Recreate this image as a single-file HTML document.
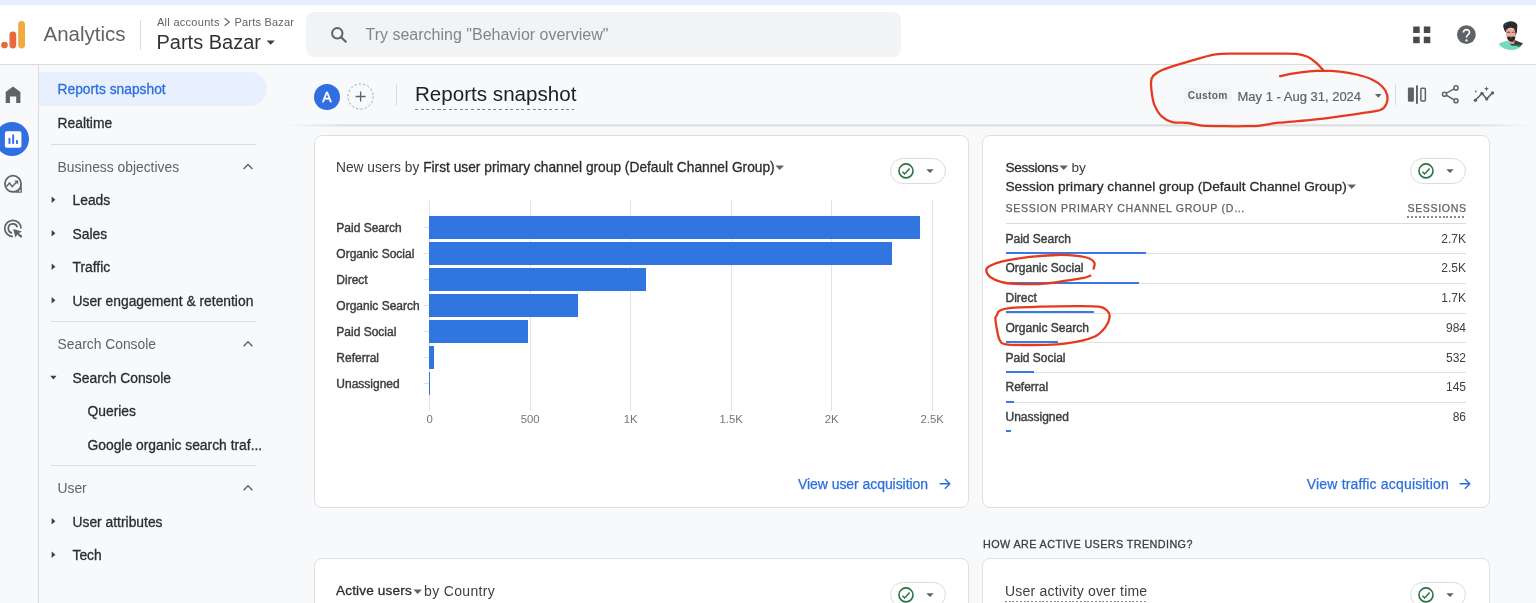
<!DOCTYPE html>
<html lang="en">
<head>
<meta charset="utf-8">
<title>Analytics | Reports snapshot</title>
<style>
  html, body { margin: 0; padding: 0; }
  body {
    width: 1536px; height: 603px; overflow: hidden; position: relative;
    background: #f8f9fa;
    font-family: "Liberation Sans", sans-serif;
    color: #3c4043;
    -webkit-font-smoothing: antialiased;
  }
  .abs { position: absolute; }
  .t { position: absolute; white-space: nowrap; line-height: 1; transform: translateY(-50%); }
  .b { font-weight: bold; }

  /* top chrome */
  #strip { left: 0; top: 0; width: 1536px; height: 6px; background: linear-gradient(to bottom, #e8eefc 0, #e8eefc 5px, #f4f7fd 5px, #f4f7fd 6px); }
  #header { left: 0; top: 6px; width: 1536px; height: 58px; background: #fff; border-bottom: 1px solid #dadce0; }
  #search { left: 306px; top: 12px; width: 595px; height: 45px; background: #f1f3f4; border-radius: 8px; }

  /* rail + nav */
  #railborder { left: 38px; top: 65px; width: 1px; height: 538px; background: #dadce0; }
  #navactive { left: 39px; top: 72px; width: 228px; height: 34px; background: #e8f0fe; border-radius: 0 17px 17px 0; }
  .nav { font-size: 13.85px; color: #2a2d30; left: 72.5px; -webkit-text-stroke: 0.3px #2a2d30; margin-top: 1px; }
  .navh { font-size: 13.85px; color: #5f6368; left: 57.5px; margin-top: 0.8px; }
  .navdiv { position: absolute; left: 51px; width: 205px; height: 1px; background: #dadce0; }

  /* cards */
  .card { position: absolute; background: #fff; border: 1px solid #dddfe3; border-radius: 8px; box-sizing: border-box; }
  .pill { position: absolute; width: 55.7px; height: 25.6px; border: 1px solid #dadce0; border-radius: 13px; box-sizing: border-box; background: #fff; }
  .grid { position: absolute; top: 199.5px; width: 1px; height: 211.5px; background: #e3e3e3; }
  .bar { position: absolute; left: 429px; height: 23px; background: #3075e0; }
  .blab { font-size: 12px; color: #3c4043; left: 336.3px; -webkit-text-stroke: 0.42px #3c4043; }
  .xt { font-size: 11.3px; color: #757575; transform: translate(-50%, -50%); }
  .link { font-size: 14px; color: #2b6fdc; -webkit-text-stroke: 0.25px #2b6fdc; }
  .rlab { font-size: 12px; color: #3c4043; left: 1005.5px; -webkit-text-stroke: 0.42px #3c4043; }
  .rval { font-size: 12px; color: #3c4043; right: 70px; }
  .rsep { position: absolute; left: 1005.5px; width: 460.5px; height: 1px; background: #e0e0e0; }
  .rbar { position: absolute; left: 1005.5px; height: 2px; background: #3b78e7; }
</style>
</head>
<body>
<div id="root" style="position:absolute; left:0; top:0; width:1536px; height:603px; will-change:transform; overflow:hidden;">

<!-- ===== top chrome ===== -->
<div id="strip" class="abs"></div>
<div id="header" class="abs"></div>
<div id="search" class="abs"></div>

<!-- GA logo -->
<svg class="abs" style="left:0;top:18px" width="30" height="34" viewBox="0 0 30 34">
  <circle cx="4.5" cy="27.1" r="3.3" fill="#e8683f"/>
  <rect x="9.5" y="13.4" width="6.7" height="17" rx="3.35" fill="#e8683f"/>
  <rect x="18.2" y="3" width="6.8" height="27.4" rx="3.4" fill="#f0ab3e"/>
</svg>
<div id="tAnalytics" class="t" style="left:43.5px; top:34px; font-size:20.5px; color:#5f6368;">Analytics</div>
<div class="abs" style="left:140px; top:20px; width:1px; height:30px; background:#dadce0;"></div>
<div id="tCrumb" class="t" style="left:157px; top:22px; font-size:11px; color:#5f6368; letter-spacing:0.28px;">All accounts</div>
<svg class="abs" style="left:223px;top:17px" width="8" height="10" viewBox="0 0 8 10"><path d="M1.6 1.2 L6.4 5 L1.6 8.8" fill="none" stroke="#5f6368" stroke-width="1.1"/></svg>
<div id="tCrumb2" class="t" style="left:234.5px; top:22px; font-size:11px; color:#5f6368; letter-spacing:0.2px;">Parts Bazar</div>
<div id="tProp" class="t" style="left:156.5px; top:41.6px; font-size:20px; color:#303336;">Parts Bazar</div>
<svg class="abs" style="left:266px;top:40px" width="10" height="6" viewBox="0 0 10 6"><path d="M0.6 0.6 L8.8 0.6 L4.7 4.7 Z" fill="#3c4043"/></svg>

<!-- search icon + placeholder -->
<svg class="abs" style="left:329px;top:25px" width="20" height="20" viewBox="0 0 20 20">
  <circle cx="8.3" cy="8.3" r="5.2" fill="none" stroke="#5f6368" stroke-width="2"/>
  <path d="M12.2 12.2 L17.3 17.3" stroke="#5f6368" stroke-width="2.2" fill="none"/>
</svg>
<div id="tSearch" class="t" style="left:365.5px; top:35px; font-size:16px; color:#80868b;">Try searching "Behavior overview"</div>

<!-- apps grid -->
<svg class="abs" style="left:1413px;top:26px" width="18" height="18" viewBox="0 0 18 18">
  <rect x="0.2" y="0.5" width="6.5" height="6.5" fill="#46494d"/><rect x="10.8" y="0.5" width="6.5" height="6.5" fill="#46494d"/>
  <rect x="0.2" y="10.7" width="6.5" height="6.5" fill="#46494d"/><rect x="10.8" y="10.7" width="6.5" height="6.5" fill="#46494d"/>
</svg>
<!-- help -->
<svg class="abs" style="left:1456px;top:24px" width="22" height="22" viewBox="0 0 22 22">
  <circle cx="10.4" cy="10.7" r="9.4" fill="#5f6368"/>
  <path d="M7.4 8.6 C7.4 4.6 13.6 4.8 13.5 8.4 C13.4 10.6 10.5 10.7 10.5 13.4" fill="none" stroke="#fff" stroke-width="1.7"/>
  <circle cx="10.5" cy="16.4" r="1.15" fill="#fff"/>
</svg>
<!-- avatar (drawn in 15.86x zoom coordinates) -->
<svg class="abs" style="left:1494px;top:16px" width="36" height="38" viewBox="0 0 571 603">
  <g>
    <path d="M72 445 Q150 395 215 392 L300 450 L400 470 L446 470 A252 252 0 0 1 72 445 Z" fill="#72dcc1"/>
    <path d="M250 395 L335 385 L462 436 L405 486 L265 462 Z" fill="#34383a"/>
    <path d="M275 462 L420 452 L412 472 L290 476 Z" fill="#3f8b4d"/>
    <path d="M188 200 Q180 300 205 350 Q240 440 300 420 Q345 380 348 300 L345 195 Z" fill="#ecac98"/>
    <path d="M240 400 L325 395 L322 442 Q285 452 250 432 Z" fill="#e89c88"/>
    <path d="M146 170 Q140 120 200 100 Q270 70 330 100 Q385 130 368 180 Q372 260 345 305 Q335 230 318 200 Q250 170 198 215 Q192 250 186 262 Q160 230 146 170 Z" fill="#2a2c30"/>
    <path d="M205 255 Q235 240 262 256 L262 268 Q235 262 205 270 Z M282 256 Q310 240 332 252 L332 266 Q310 260 282 268 Z" fill="#5b5e63"/>
    <path d="M206 335 Q225 322 270 330 Q315 318 338 335 Q338 390 300 408 Q262 416 228 385 Q208 365 206 335 Z" fill="#2b2a2b"/>
    <path d="M255 340 Q272 334 290 342 Q272 350 255 340 Z" fill="#d8736a"/>
    <circle cx="184" cy="132" r="9" fill="#3b7be0"/><circle cx="214" cy="101" r="8" fill="#5b8fe8"/>
  </g>
</svg>

<!-- ===== rail + nav ===== -->
<div id="railborder" class="abs"></div>
<div id="navactive" class="abs"></div>

<!-- rail: home -->
<svg class="abs" style="left:3px;top:84px" width="22" height="22" viewBox="0 0 22 22">
  <path d="M2.7 18.9 L2.7 7.9 L10 2.5 L17.4 7.9 L17.4 18.9 L13.2 18.9 L13.2 12.4 L6.95 12.4 L6.95 18.9 Z" fill="#5f6368"/>
</svg>
<!-- rail: reports (active) -->
<div class="abs" style="left:-4.6px; top:122.4px; width:33.8px; height:33.8px; border-radius:50%; background:#2f6fe0;"></div>
<svg class="abs" style="left:4px;top:130px" width="20" height="20" viewBox="0 0 20 20">
  <rect x="0.9" y="1.2" width="16.5" height="16.5" rx="1.8" fill="#fff"/>
  <rect x="4.5" y="7.9" width="1.9" height="6" fill="#2f6fe0"/>
  <rect x="8.2" y="4.5" width="1.9" height="9.4" fill="#2f6fe0"/>
  <rect x="12" y="10.1" width="1.9" height="3.8" fill="#2f6fe0"/>
</svg>
<!-- rail: explore -->
<svg class="abs" style="left:2px;top:172px" width="24" height="24" viewBox="0 0 24 24">
  <circle cx="11" cy="11.8" r="8.1" fill="none" stroke="#5f6368" stroke-width="1.75"/>
  <path d="M19.9 11.8 L19.9 19.9 Q19.9 20.7 19.1 20.7 L11 20.7 A8.9 8.9 0 0 0 19.9 11.8 Z" fill="#5f6368"/>
  <circle cx="17.9" cy="18.9" r="0.85" fill="#f1f3f4"/>
  <path d="M4.5 14.4 L7.45 11 L10.2 14.7 L14.9 9.7" fill="none" stroke="#5f6368" stroke-width="1.5"/>
  <path d="M12.2 8.4 L16.2 8.4 L16.2 12.4 Z" fill="#5f6368"/>
</svg>
<!-- rail: advertising -->
<svg class="abs" style="left:2px;top:217px" width="24" height="24" viewBox="0 0 24 24">
  <path d="M19 11.4 A8.1 8.1 0 1 0 10.9 19.5" fill="none" stroke="#5f6368" stroke-width="1.75"/>
  <path d="M15.34 10.21 A4.6 4.6 0 1 0 10.1 15.93" fill="none" stroke="#5f6368" stroke-width="1.75"/>
  <path d="M11.2 11.9 L19.9 14.4 L16.7 16.2 L20.4 19.1 L18.9 20.9 L15.4 17.6 L13.4 20.4 Z" fill="#5f6368"/>
</svg>

<!-- nav text -->
<div id="n1" class="t" style="left:57.5px; top:89.9px; font-size:13.8px; color:#2b6fdc; -webkit-text-stroke:0.3px #2b6fdc;">Reports snapshot</div>
<div id="n2" class="t nav" style="left:57.5px; top:123px;">Realtime</div>
<div class="navdiv" style="top:144px;"></div>
<div id="n3" class="t navh" style="top:167px;">Business objectives</div>
<div id="n4" class="t nav" style="top:200px;">Leads</div>
<div id="n5" class="t nav" style="top:233.5px;">Sales</div>
<div id="n6" class="t nav" style="top:267px;">Traffic</div>
<div id="n7" class="t nav" style="top:300.5px;">User engagement &amp; retention</div>
<div class="navdiv" style="top:321px;"></div>
<div id="n8" class="t navh" style="top:344px;">Search Console</div>
<div id="n9" class="t nav" style="top:377.5px;">Search Console</div>
<div id="n10" class="t nav" style="left:87.5px; top:411px;">Queries</div>
<div id="n11" class="t nav" style="left:87.5px; top:444.5px;">Google organic search traf...</div>
<div class="navdiv" style="top:465px;"></div>
<div id="n12" class="t navh" style="top:488px;">User</div>
<div id="n13" class="t nav" style="top:521.5px;">User attributes</div>
<div id="n14" class="t nav" style="top:555px;">Tech</div>

<!-- nav chevrons + triangles -->
<svg class="abs" style="left:0;top:0;pointer-events:none" width="300" height="603" viewBox="0 0 300 603">
  <g fill="none" stroke="#5f6368" stroke-width="1.4">
    <path d="M243.6 169 L248 164.4 L252.4 169"/>
    <path d="M243.6 346.3 L248 341.7 L252.4 346.3"/>
    <path d="M243.6 490.3 L248 485.7 L252.4 490.3"/>
  </g>
  <g fill="#3c4043">
    <path d="M51.6 196.6 L55.4 199.8 L51.6 203 Z"/>
    <path d="M51.6 230.1 L55.4 233.3 L51.6 236.5 Z"/>
    <path d="M51.6 263.6 L55.4 266.8 L51.6 270 Z"/>
    <path d="M51.6 297.1 L55.4 300.3 L51.6 303.5 Z"/>
    <path d="M50.2 375.8 L56.6 375.8 L53.4 379.4 Z"/>
    <path d="M51.6 518.1 L55.4 521.3 L51.6 524.5 Z"/>
    <path d="M51.6 551.6 L55.4 554.8 L51.6 558 Z"/>
  </g>
</svg>

<!-- ===== report header row ===== -->
<div class="abs" style="left:286px; top:123.6px; width:1246px; height:3px; background:linear-gradient(to bottom, rgba(60,64,67,0.04), rgba(60,64,67,0.17) 35%, rgba(60,64,67,0.15) 65%, rgba(60,64,67,0)); -webkit-mask-image:linear-gradient(to right, transparent, #000 5%, #000 95%, transparent); mask-image:linear-gradient(to right, transparent, #000 5%, #000 95%, transparent);"></div>
<div class="abs" style="left:314px; top:83.5px; width:26px; height:26px; border-radius:50%; background:#2f6fe0;"></div>
<div id="tA" class="t" style="left:327px; top:96.8px; font-size:14px; color:#fff; transform:translate(-50%,-50%); -webkit-text-stroke:0.45px #fff;">A</div>
<svg class="abs" style="left:346px;top:82px" width="30" height="30" viewBox="0 0 30 30">
  <circle cx="14.6" cy="14.5" r="12.6" fill="none" stroke="#9aa0a6" stroke-width="1" stroke-dasharray="2.2 2.2"/>
  <path d="M9.6 14.5 H19.6 M14.6 9.5 V19.5" stroke="#5f6368" stroke-width="1.3" fill="none"/>
</svg>
<div class="abs" style="left:396px; top:84px; width:1px; height:22px; background:#dadce0;"></div>
<div id="tTitle" class="t" style="left:415px; top:94.2px; font-size:20.6px; color:#202124;">Reports snapshot</div>
<div class="abs" style="left:415.1px; top:108.8px; width:159.4px; height:1.2px; background:repeating-linear-gradient(to right, #7e8185 0, #7e8185 3.1px, transparent 3.1px, transparent 5.6px);"></div>

<!-- date range -->
<div class="abs" style="left:1184px; top:88.3px; width:47.7px; height:14.6px; background:#f1f3f4; border-radius:2px;"></div>
<div id="tCustom" class="t b" style="left:1187.8px; top:95.7px; font-size:10.2px; color:#5f6368; letter-spacing:0.3px;">Custom</div>
<div id="tDate" class="t" style="left:1237.5px; top:95.6px; font-size:13px; color:#5f6368; -webkit-text-stroke:0.2px #5f6368;">May 1 - Aug 31, 2024</div>
<svg class="abs" style="left:1374px;top:93px" width="10" height="6" viewBox="0 0 10 6"><path d="M1 1 L7.6 1 L4.3 4.8 Z" fill="#5f6368"/></svg>
<div class="abs" style="left:1395px; top:84px; width:1px; height:21px; background:#dadce0;"></div>
<!-- compare -->
<svg class="abs" style="left:1406px;top:84px" width="22" height="22" viewBox="0 0 22 22">
  <rect x="1.9" y="3.4" width="6" height="14.4" rx="1.2" fill="#5f6368"/>
  <rect x="10" y="1.4" width="1.9" height="18.4" fill="#5f6368"/>
  <rect x="14.85" y="4.15" width="4.5" height="12.9" rx="1" fill="none" stroke="#5f6368" stroke-width="1.5"/>
</svg>
<!-- share -->
<svg class="abs" style="left:1440px;top:83px" width="22" height="22" viewBox="0 0 22 22">
  <path d="M16 4.9 L4.5 11.2 L16 17.8" fill="none" stroke="#5f6368" stroke-width="1.5"/>
  <circle cx="16" cy="4.9" r="2.05" fill="#f8f9fa" stroke="#5f6368" stroke-width="1.5"/>
  <circle cx="4.5" cy="11.2" r="2.05" fill="#f8f9fa" stroke="#5f6368" stroke-width="1.5"/>
  <circle cx="16" cy="17.8" r="2.05" fill="#f8f9fa" stroke="#5f6368" stroke-width="1.5"/>
</svg>
<!-- insights -->
<svg class="abs" style="left:1472px;top:83px" width="24" height="22" viewBox="0 0 24 22">
  <path d="M3.4 17.3 L10 10.4 L14.7 15.9 L20.5 9.9" fill="none" stroke="#5f6368" stroke-width="1.6"/>
  <circle cx="3.4" cy="17.3" r="1.7" fill="#5f6368"/><circle cx="10" cy="10.4" r="1.7" fill="#5f6368"/>
  <circle cx="14.7" cy="15.9" r="1.7" fill="#5f6368"/><circle cx="20.5" cy="9.9" r="1.7" fill="#5f6368"/>
  <path d="M14.5 3.2 L15.2 5 L17 5.7 L15.2 6.4 L14.5 8.2 L13.8 6.4 L12 5.7 L13.8 5 Z" fill="#5f6368"/>
  <path d="M3.8 6.8 L4.2 8 L5.4 8.4 L4.2 8.8 L3.8 10 L3.4 8.8 L2.2 8.4 L3.4 8 Z" fill="#5f6368"/>
</svg>

<!-- ===== cards ===== -->
<div class="card" style="left:314px; top:135px; width:654.5px; height:372.5px;"></div>
<div class="card" style="left:982px; top:135px; width:507.5px; height:372.5px;"></div>
<div class="card" style="left:314px; top:558px; width:654.5px; height:80px;"></div>
<div class="card" style="left:982px; top:558px; width:507.5px; height:80px;"></div>

<!-- card 1: bar chart -->
<div id="c1t" class="t" style="left:336px; top:168px; font-size:13.75px; color:#3c4043;">New users by <span style="color:#2a2d30;-webkit-text-stroke:0.3px #2a2d30;">First user primary channel group (Default Channel Group)</span></div>
<svg class="abs" style="left:775px;top:165px" width="10" height="6" viewBox="0 0 10 6"><path d="M0.4 0.6 L9 0.6 L4.7 4.9 Z" fill="#5f6368"/></svg>
<div class="pill" style="left:890.3px; top:158.0px;"></div><svg class="abs" style="left:897.0px;top:162.0px" width="18" height="18" viewBox="0 0 18 18"><circle cx="9" cy="8.9" r="7" fill="none" stroke="#2a7240" stroke-width="1.6"/><path d="M5.4 9.8 L7.7 12 L12.6 6.5" fill="none" stroke="#2a7240" stroke-width="1.4"/></svg><svg class="abs" style="left:926.3px;top:169.0px" width="9" height="5" viewBox="0 0 9 5"><path d="M0.2 0.2 L7.8 0.2 L4 4 Z" fill="#5f6368"/></svg>
<div class="grid" style="left:429.2px;"></div>
<div class="grid" style="left:529.7px;"></div>
<div class="grid" style="left:630.2px;"></div>
<div class="grid" style="left:730.7px;"></div>
<div class="grid" style="left:831.2px;"></div>
<div class="grid" style="left:931.7px;"></div>
<div class="abs" style="left:424px; top:227.0px; width:6px; height:1px; background:#e0e0e0;"></div>
<div class="bar" style="top:215.5px; width:490.7px;"></div>
<div class="t blab" style="top:227.6px;">Paid Search</div>
<div class="abs" style="left:424px; top:253.0px; width:6px; height:1px; background:#e0e0e0;"></div>
<div class="bar" style="top:241.5px; width:463.3px;"></div>
<div class="t blab" style="top:253.6px;">Organic Social</div>
<div class="abs" style="left:424px; top:279.1px; width:6px; height:1px; background:#e0e0e0;"></div>
<div class="bar" style="top:267.6px; width:216.7px;"></div>
<div class="t blab" style="top:279.7px;">Direct</div>
<div class="abs" style="left:424px; top:305.1px; width:6px; height:1px; background:#e0e0e0;"></div>
<div class="bar" style="top:293.6px; width:149.0px;"></div>
<div class="t blab" style="top:305.7px;">Organic Search</div>
<div class="abs" style="left:424px; top:331.1px; width:6px; height:1px; background:#e0e0e0;"></div>
<div class="bar" style="top:319.6px; width:99.0px;"></div>
<div class="t blab" style="top:331.7px;">Paid Social</div>
<div class="abs" style="left:424px; top:357.1px; width:6px; height:1px; background:#e0e0e0;"></div>
<div class="bar" style="top:345.6px; width:4.7px;"></div>
<div class="t blab" style="top:357.8px;">Referral</div>
<div class="abs" style="left:424px; top:383.2px; width:6px; height:1px; background:#e0e0e0;"></div>
<div class="bar" style="top:371.7px; width:1.3px;"></div>
<div class="t blab" style="top:383.8px;">Unassigned</div>
<div class="t xt" style="left:429.7px; top:419.8px;">0</div>
<div class="t xt" style="left:530.2px; top:419.8px;">500</div>
<div class="t xt" style="left:630.7px; top:419.8px;">1K</div>
<div class="t xt" style="left:731.2px; top:419.8px;">1.5K</div>
<div class="t xt" style="left:831.7px; top:419.8px;">2K</div>
<div class="t xt" style="left:932.2px; top:419.8px;">2.5K</div>
<div id="l1" class="t link" style="left:798px; top:483.8px; letter-spacing:-0.06px;">View user acquisition</div>
<svg class="abs" style="left:938px;top:477px" width="14" height="14" viewBox="0 0 14 14"><path d="M1.6 6.8 H11.6 M6.9 1.9 L11.8 6.8 L6.9 11.7" fill="none" stroke="#2b6fdc" stroke-width="1.4"/></svg>

<!-- card 2: sessions table -->
<div id="c2a" class="t" style="left:1005.5px; top:168px; font-size:13.6px; color:#3c4043;"><span style="color:#2a2d30;-webkit-text-stroke:0.3px #2a2d30;letter-spacing:-0.3px;">Sessions</span><span style="display:inline-block;width:13.2px"></span>by</div>
<svg class="abs" style="left:1058.5px;top:165px" width="10" height="6" viewBox="0 0 10 6"><path d="M0.4 0.6 L9 0.6 L4.7 4.9 Z" fill="#5f6368"/></svg>
<div id="c2b" class="t" style="left:1005.5px; top:186.6px; font-size:13.68px; color:#2a2d30; -webkit-text-stroke:0.3px #2a2d30;">Session primary channel group (Default Channel Group)</div>
<svg class="abs" style="left:1347px;top:183.6px" width="10" height="6" viewBox="0 0 10 6"><path d="M0.4 0.6 L9 0.6 L4.7 4.9 Z" fill="#5f6368"/></svg>
<div class="pill" style="left:1410.3px; top:158.0px;"></div><svg class="abs" style="left:1417.0px;top:162.0px" width="18" height="18" viewBox="0 0 18 18"><circle cx="9" cy="8.9" r="7" fill="none" stroke="#2a7240" stroke-width="1.6"/><path d="M5.4 9.8 L7.7 12 L12.6 6.5" fill="none" stroke="#2a7240" stroke-width="1.4"/></svg><svg class="abs" style="left:1446.3px;top:169.0px" width="9" height="5" viewBox="0 0 9 5"><path d="M0.2 0.2 L7.8 0.2 L4 4 Z" fill="#5f6368"/></svg>
<div id="c2h" class="t" style="left:1005.5px; top:207.6px; font-size:10.6px; color:#5f6368; letter-spacing:0.68px; -webkit-text-stroke:0.25px #5f6368;">SESSION PRIMARY CHANNEL GROUP (D…</div>
<div id="c2s" class="t" style="right:70px; top:207.6px; font-size:10.6px; color:#5f6368; letter-spacing:0.62px; margin-right:-0.62px; -webkit-text-stroke:0.25px #5f6368;">SESSIONS</div>
<div class="abs" style="left:1407px; top:216.3px; width:59px; height:1.3px; background:repeating-linear-gradient(to right, #85888c 0, #85888c 2px, transparent 2px, transparent 3.95px);"></div>
<div class="rsep" style="top:223px; background:#dadce0;"></div>
<div class="t rlab" style="top:238.6px;">Paid Search</div>
<div class="t rval" style="top:238.6px;">2.7K</div>
<div class="rsep" style="top:253.0px;"></div>
<div class="rbar" style="top:251.9px; width:140.6px;"></div>
<div class="t rlab" style="top:268.4px;">Organic Social</div>
<div class="t rval" style="top:268.4px;">2.5K</div>
<div class="rsep" style="top:282.8px;"></div>
<div class="rbar" style="top:281.7px; width:133.3px;"></div>
<div class="t rlab" style="top:298.1px;">Direct</div>
<div class="t rval" style="top:298.1px;">1.7K</div>
<div class="rsep" style="top:312.5px;"></div>
<div class="rbar" style="top:311.4px; width:88.7px;"></div>
<div class="t rlab" style="top:327.9px;">Organic Search</div>
<div class="t rval" style="top:327.9px;">984</div>
<div class="rsep" style="top:342.2px;"></div>
<div class="rbar" style="top:341.2px; width:52.2px;"></div>
<div class="t rlab" style="top:357.6px;">Paid Social</div>
<div class="t rval" style="top:357.6px;">532</div>
<div class="rsep" style="top:372.0px;"></div>
<div class="rbar" style="top:370.9px; width:28.6px;"></div>
<div class="t rlab" style="top:387.4px;">Referral</div>
<div class="t rval" style="top:387.4px;">145</div>
<div class="rsep" style="top:401.8px;"></div>
<div class="rbar" style="top:400.7px; width:8.3px;"></div>
<div class="t rlab" style="top:417.1px;">Unassigned</div>
<div class="t rval" style="top:417.1px;">86</div>
<div class="rbar" style="top:430.4px; width:5.4px;"></div>
<div id="l2" class="t link" style="left:1306.8px; top:483.8px; letter-spacing:0.17px;">View traffic acquisition</div>
<svg class="abs" style="left:1458px;top:477px" width="14" height="14" viewBox="0 0 14 14"><path d="M1.6 6.8 H11.6 M6.9 1.9 L11.8 6.8 L6.9 11.7" fill="none" stroke="#2b6fdc" stroke-width="1.4"/></svg>

<!-- bottom row -->
<div id="how" class="t" style="left:983px; top:543.6px; font-size:10.8px; color:#3c4043; letter-spacing:0.4px; -webkit-text-stroke:0.3px #3c4043;">HOW ARE ACTIVE USERS TRENDING?</div>
<div id="c3t" class="t" style="left:336px; top:591.2px; font-size:13.6px; color:#2a2d30; -webkit-text-stroke:0.3px #2a2d30; letter-spacing:0.15px;">Active users</div><div id="c3u" class="t" style="left:424px; top:591.2px; font-size:14px; color:#3c4043; letter-spacing:0.35px;">by Country</div>
<svg class="abs" style="left:412.5px;top:588.6px" width="10" height="6" viewBox="0 0 10 6"><path d="M0.4 0.6 L9 0.6 L4.7 4.9 Z" fill="#5f6368"/></svg>
<div class="pill" style="left:890.3px; top:581.5px;"></div><svg class="abs" style="left:897.0px;top:585.5px" width="18" height="18" viewBox="0 0 18 18"><circle cx="9" cy="8.9" r="7" fill="none" stroke="#2a7240" stroke-width="1.6"/><path d="M5.4 9.8 L7.7 12 L12.6 6.5" fill="none" stroke="#2a7240" stroke-width="1.4"/></svg><svg class="abs" style="left:926.3px;top:592.5px" width="9" height="5" viewBox="0 0 9 5"><path d="M0.2 0.2 L7.8 0.2 L4 4 Z" fill="#5f6368"/></svg>
<div id="c4t" class="t" style="left:1005px; top:590.9px; font-size:14px; color:#3c4043; letter-spacing:0.2px;">User activity over time</div>
<div class="abs" style="left:1005.2px; top:600.9px; width:142px; height:1.3px; background:repeating-linear-gradient(to right, #85888c 0, #85888c 1.9px, transparent 1.9px, transparent 3.75px);"></div>
<div class="pill" style="left:1410.3px; top:581.5px;"></div><svg class="abs" style="left:1417.0px;top:585.5px" width="18" height="18" viewBox="0 0 18 18"><circle cx="9" cy="8.9" r="7" fill="none" stroke="#2a7240" stroke-width="1.6"/><path d="M5.4 9.8 L7.7 12 L12.6 6.5" fill="none" stroke="#2a7240" stroke-width="1.4"/></svg><svg class="abs" style="left:1446.3px;top:592.5px" width="9" height="5" viewBox="0 0 9 5"><path d="M0.2 0.2 L7.8 0.2 L4 4 Z" fill="#5f6368"/></svg>

</div>
<!-- red hand-drawn annotations -->
<svg class="abs" style="left:0;top:0;pointer-events:none" width="1536" height="603" viewBox="0 0 1536 603">
 <g fill="none" stroke="#e53a1e" stroke-width="2.3" stroke-linecap="round" stroke-linejoin="round">
  <path d="M1280.1 76.2 C1282.1 75.8 1287.4 74.4 1292.3 73.6 C1297.2 72.8 1304.1 71.9 1309.3 71.4 C1314.5 70.9 1318.5 70.7 1323.6 70.7 C1328.7 70.7 1334.2 71.0 1339.7 71.6 C1345.2 72.2 1351.3 73.2 1356.7 74.5 C1362.1 75.8 1367.7 77.5 1371.9 79.5 C1376.1 81.5 1379.5 83.8 1382.0 86.3 C1384.5 88.8 1386.4 91.8 1387.1 94.8 C1387.8 97.8 1387.4 101.6 1386.3 104.1 C1385.2 106.6 1383.8 108.6 1380.3 110.0 C1376.8 111.4 1371.3 111.6 1365.1 112.6 C1358.9 113.6 1352.4 114.6 1343.1 115.9 C1333.8 117.2 1320.0 119.1 1309.3 120.2 C1298.6 121.3 1287.3 121.8 1278.8 122.7 C1270.3 123.6 1264.1 125.2 1258.5 125.8 C1252.9 126.4 1250.7 126.1 1245.0 126.2 C1239.3 126.3 1231.8 126.3 1224.6 126.2 C1217.4 126.1 1208.1 126.1 1202.1 125.6 C1196.1 125.1 1193.5 123.6 1188.5 123.0 C1183.5 122.4 1176.6 123.1 1172.2 122.1 C1167.8 121.0 1165.0 119.5 1162.0 116.7 C1159.0 113.9 1156.2 109.1 1154.5 105.1 C1152.8 101.1 1152.4 96.8 1151.8 92.9 C1151.2 89.1 1150.9 84.8 1151.1 82.0 C1151.3 79.2 1151.3 77.9 1153.2 75.9 C1155.1 73.9 1157.3 72.1 1162.7 69.8 C1168.1 67.5 1177.0 64.9 1185.8 62.3 C1194.6 59.7 1206.4 55.7 1215.7 54.3 C1225.0 52.9 1231.6 53.8 1241.6 53.7 C1251.5 53.6 1266.4 53.6 1275.4 53.6 C1284.4 53.6 1290.3 53.3 1295.7 53.8 C1301.1 54.3 1304.2 55.2 1307.6 56.7 C1311.0 58.2 1313.3 60.3 1316.0 62.6 C1318.7 64.9 1322.3 69.4 1323.6 70.7"/>
  <path d="M1090.3 275.7 C1089.0 276.1 1086.6 277.4 1082.6 278.2 C1078.6 279.0 1072.0 279.8 1066.2 280.6 C1060.4 281.5 1054.1 282.7 1048.0 283.3 C1041.9 283.9 1036.7 284.2 1029.7 284.2 C1022.7 284.1 1012.4 284.1 1006.0 283.0 C999.6 281.9 994.7 279.9 991.4 277.8 C988.1 275.7 986.6 272.5 986.3 270.5 C986.0 268.5 986.9 267.5 989.6 266.0 C992.3 264.5 995.7 262.9 1002.4 261.4 C1009.1 259.9 1020.6 258.0 1029.7 256.9 C1038.8 255.8 1049.2 255.2 1057.1 255.0 C1065.0 254.8 1071.7 255.3 1077.2 255.9 C1082.7 256.5 1087.0 257.5 1089.9 258.7 C1092.8 259.9 1093.9 261.5 1094.5 263.2 C1095.1 264.9 1093.8 267.8 1093.6 268.7"/>
  <path d="M996.9 315.2 C997.6 314.0 997.2 311.9 999.6 310.7 C1002.0 309.5 1005.0 308.6 1011.5 307.9 C1018.0 307.2 1028.2 307.0 1038.9 306.7 C1049.6 306.4 1065.4 306.1 1075.4 306.1 C1085.4 306.1 1093.8 305.9 1099.1 306.7 C1104.4 307.5 1105.5 309.0 1107.3 310.7 C1109.0 312.4 1109.9 314.4 1109.6 317.1 C1109.3 319.8 1107.8 323.9 1105.4 327.1 C1103.0 330.3 1100.1 333.8 1095.4 336.2 C1090.7 338.6 1083.6 340.3 1077.2 341.7 C1070.8 343.1 1065.0 343.8 1057.1 344.4 C1049.2 344.9 1038.2 345.0 1029.7 345.0 C1021.2 345.0 1011.0 345.2 1006.0 344.4 C1001.0 343.5 1001.2 342.8 999.6 339.9 C998.0 337.0 997.2 330.8 996.5 327.1 C995.8 323.5 995.3 320.0 995.4 318.0 C995.5 316.0 996.2 316.4 996.9 315.2"/>
 </g>
</svg>
</body>
</html>
